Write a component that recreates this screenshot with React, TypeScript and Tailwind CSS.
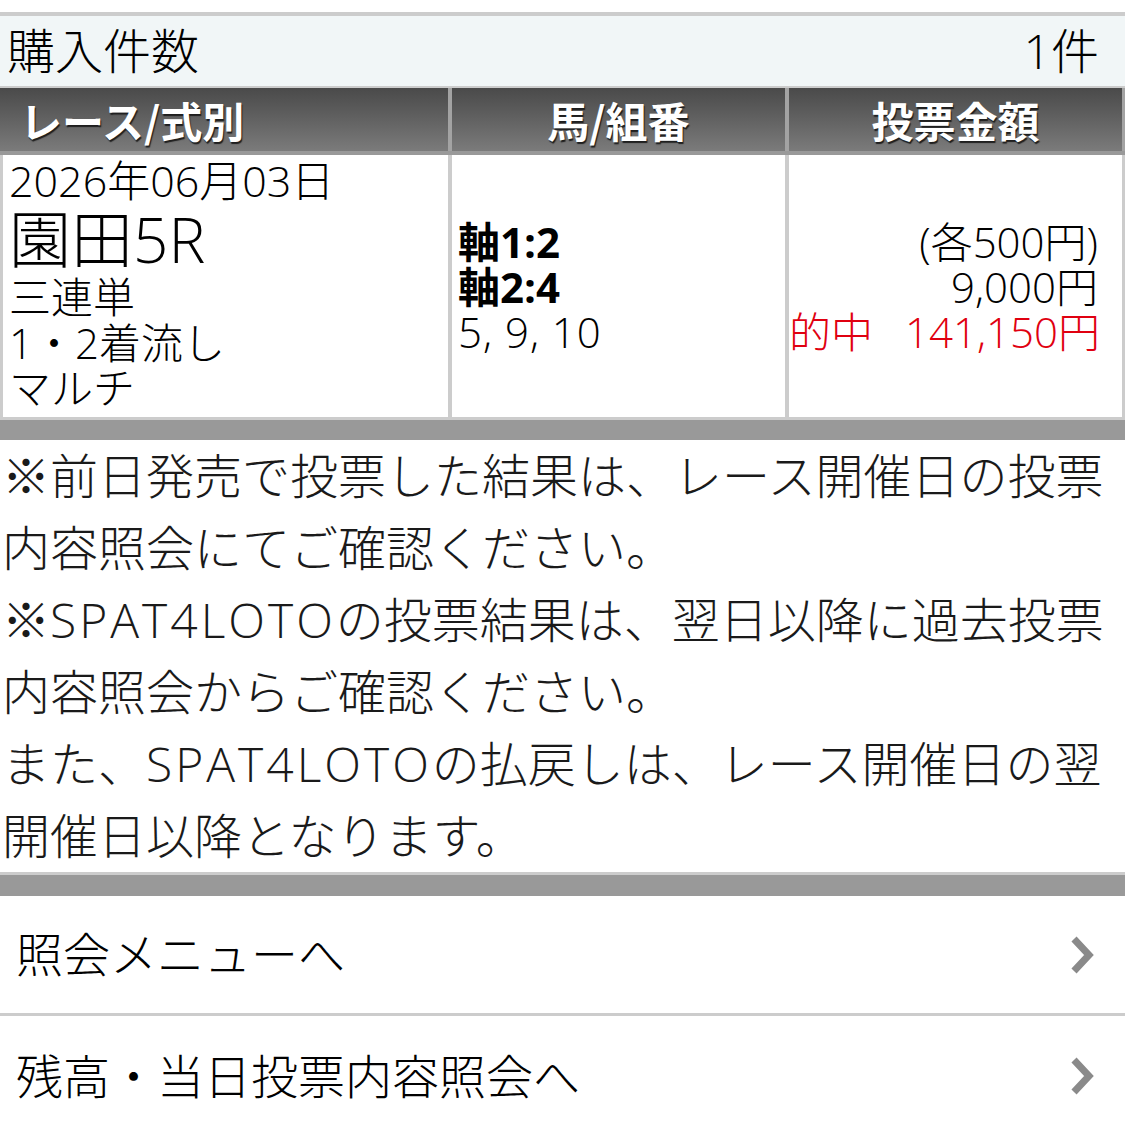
import React from "react";

const S = () => <span className="tracking-[3px]">SPAT4LOTO</span>;

const notes: React.ReactNode[] = [
  "※前日発売で投票した結果は、レース開催日の投票",
  "内容照会にてご確認ください。",
  <>
    ※<S />の投票結果は、翌日以降に過去投票
  </>,
  "内容照会からご確認ください。",
  <>
    また、<S />の払戻しは、レース開催日の翌
  </>,
  "開催日以降となります。",
];

function Chevron() {
  return (
    <svg width="26" height="40" viewBox="0 0 26 40" className="shrink-0">
      <polyline
        points="5,4 20,20 5,36"
        fill="none"
        stroke="#8a8a8a"
        strokeWidth="7"
        strokeLinejoin="miter"
      />
    </svg>
  );
}

function MenuRow({ label, last }: { label: string; last?: boolean }) {
  return (
    <div
      className={
        "flex h-[120px] items-center justify-between pl-[16px] pr-[30px] text-[47px] leading-none " +
        (last ? "" : "border-b-[3px] border-[#cccccc]")
      }
    >
      <span>{label}</span>
      <Chevron />
    </div>
  );
}

export default function App() {
  return (
    <div className="w-[1125px] min-h-[1125px] bg-white font-['Open_Sans','Noto_Sans_CJK_JP',sans-serif] font-light text-black">
      <div className="h-3" />

      {/* 購入件数 */}
      <div className="flex h-[76px] items-center justify-between border-t-4 border-b-2 border-[#cccccc] bg-[#f1f6f7] pl-[7px] pr-[26px] text-[48px] leading-none">
        <span>購入件数</span>
        <span>1件</span>
      </div>

      {/* ヘッダー */}
      <div className="grid grid-cols-[448px_333px_333px] gap-x-1 border-b-4 border-[#999999] bg-[#a3a3a3] pr-[3px]">
        {["レース/式別", "馬/組番", "投票金額"].map((t, i) => (
          <div
            key={t}
            className={
              "flex h-[63px] items-center bg-gradient-to-b from-[#4a4a4a] to-[#7b7b7b] font-['Noto_Sans_CJK_JP',sans-serif] text-[42px] font-bold leading-none text-white [text-shadow:1px_2px_1px_#1e1e1e] " +
              (i === 0 ? "pl-[20px]" : "justify-center")
            }
          >
            {t}
          </div>
        ))}
      </div>

      {/* 明細 */}
      <div className="grid grid-cols-[445px_333px_333px] gap-x-1 border-b-[3px] border-[#cccccc] bg-[#cccccc] px-[3px]">
        <div className="h-[262px] bg-white pl-[6px] pt-[3px]">
          <div className="whitespace-nowrap text-[43px] leading-[46px]">2026年06月03日</div>
          <div className="whitespace-nowrap text-[62px] leading-[70px]">園田5R</div>
          <div className="text-[42px] leading-[46px]">三連単</div>
          <div className="text-[42px] leading-[46px]">1・2着流し</div>
          <div className="text-[42px] leading-[44px]">マルチ</div>
        </div>
        <div className="flex h-[262px] flex-col justify-center bg-white pl-[6px] text-[42px] leading-[45px]">
          <div className="font-bold">軸1:2</div>
          <div className="font-bold">軸2:4</div>
          <div className="tracking-[1px]">5, 9, 10</div>
        </div>
        <div className="flex h-[262px] flex-col justify-center bg-white pr-[24px] text-right text-[42px] leading-[45px]">
          <div>(各500円)</div>
          <div>9,000円</div>
          <div className="whitespace-nowrap text-[#e00010]">
            的中<span className="ml-[32px]">141,150円</span>
          </div>
        </div>
      </div>
      <div className="h-5 bg-[#999999]" />

      {/* 注意書き */}
      <div className="px-[2px] text-[48px] leading-[72px] text-[#1a1a1a]">
        {notes.map((n, i) => (
          <div key={i} className="whitespace-nowrap">
            {n}
          </div>
        ))}
      </div>

      <div className="h-[3px] bg-[#cccccc]" />
      <div className="h-[21px] bg-[#999999]" />

      <MenuRow label="照会メニューへ" />
      <MenuRow label="残高・当日投票内容照会へ" last />
    </div>
  );
}
